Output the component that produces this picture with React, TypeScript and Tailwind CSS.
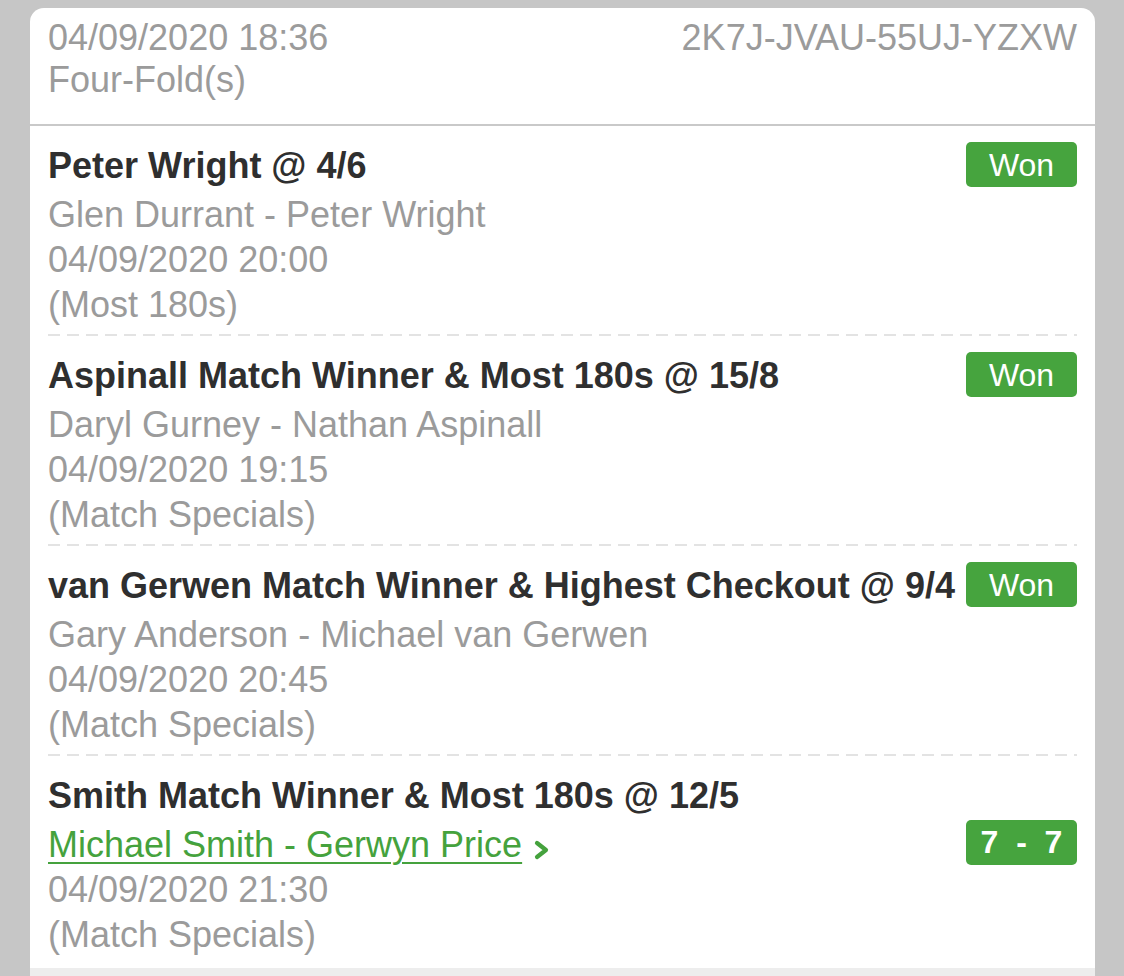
import React from "react";

type Leg = {
    title: string;
    fixture: string;
    start: string;
    market: string;
    live?: boolean;
    score?: string;
};

const legs: Leg[] = [
    { title: "Peter Wright @ 4/6", fixture: "Glen Durrant - Peter Wright", start: "04/09/2020 20:00", market: "(Most 180s)" },
    { title: "Aspinall Match Winner & Most 180s @ 15/8", fixture: "Daryl Gurney - Nathan Aspinall", start: "04/09/2020 19:15", market: "(Match Specials)" },
    { title: "van Gerwen Match Winner & Highest Checkout @ 9/4", fixture: "Gary Anderson - Michael van Gerwen", start: "04/09/2020 20:45", market: "(Match Specials)" },
    { title: "Smith Match Winner & Most 180s @ 12/5", fixture: "Michael Smith - Gerwyn Price", start: "04/09/2020 21:30", market: "(Match Specials)", live: true, score: "7  -  7" },
];

const Chevron = () => (
    <svg width="18" height="24" viewBox="0 0 18 24" className="ml-[11px] mt-[10px]">
        <polyline points="4,5 13,12 4,19" fill="none" stroke="#45a23d" strokeWidth="4.2" strokeLinecap="round" strokeLinejoin="round" />
    </svg>
);

const Dashes = () => (
    <div className="h-[2px] w-full bg-[linear-gradient(to_right,#e3e3e3_12px,transparent_12px)] bg-[length:19px_2px] bg-repeat-x" />
);

const LegRow = ({ leg, last }: { leg: Leg; last: boolean }) => (
    <div>
        <div className={`pt-[14px] ${last ? "pb-[11px]" : "pb-[7px]"}`}>
            <div className="flex items-start justify-between gap-[10px]">
                <div className="text-[36px] leading-[52px] font-bold text-[#2f2f2f] whitespace-nowrap">{leg.title}</div>
                {!leg.live && (
                    <div className="mt-[2px] w-[111px] h-[45px] shrink-0 rounded-[5px] bg-[#46a43e] text-white text-[32px] flex items-center justify-center">
                        Won
                    </div>
                )}
            </div>
            {leg.live ? (
                <div className="flex items-center justify-between leading-[45px] text-[36px]">
                    <div className="flex items-center">
                        <span className="text-[#45a23d] underline decoration-[2px] underline-offset-[5px]">{leg.fixture}</span>
                        <Chevron />
                    </div>
                    <div className="-mt-[4px] w-[111px] h-[45px] rounded-[5px] bg-[#46a43e] text-white text-[32px] font-bold flex items-center justify-center whitespace-pre">
                        {leg.score}
                    </div>
                </div>
            ) : (
                <div className="text-[36px] leading-[45px] text-[#9b9b9b]">{leg.fixture}</div>
            )}
            <div className="text-[36px] leading-[45px] text-[#9b9b9b]">{leg.start}</div>
            <div className="text-[36px] leading-[45px] text-[#9b9b9b]">{leg.market}</div>
        </div>
        {!last && <Dashes />}
    </div>
);

export default function App() {
    return (
        <div className="min-h-screen bg-[#c6c6c6] pt-2 pl-[30px] pr-[29px] font-['Liberation_Sans',Arial,sans-serif] overflow-hidden">
            <div className="bg-white rounded-t-[14px] overflow-hidden">
                {/* ticket header */}
                <div className="flex justify-between px-[18px] pt-[9px] pb-[23px] text-[36px] leading-[42px] text-[#9b9b9b]">
                    <div>
                        <div>04/09/2020 18:36</div>
                        <div>Four-Fold(s)</div>
                    </div>
                    <div>2K7J-JVAU-55UJ-YZXW</div>
                </div>
                <div className="h-[2px] bg-[#c9c9c9]" />

                <div className="px-[18px]">
                    {legs.map((leg, i) => (
                        <LegRow key={i} leg={leg} last={i === legs.length - 1} />
                    ))}
                </div>
                <div className="h-[20px] bg-[#ededed]" />
            </div>
        </div>
    );
}
